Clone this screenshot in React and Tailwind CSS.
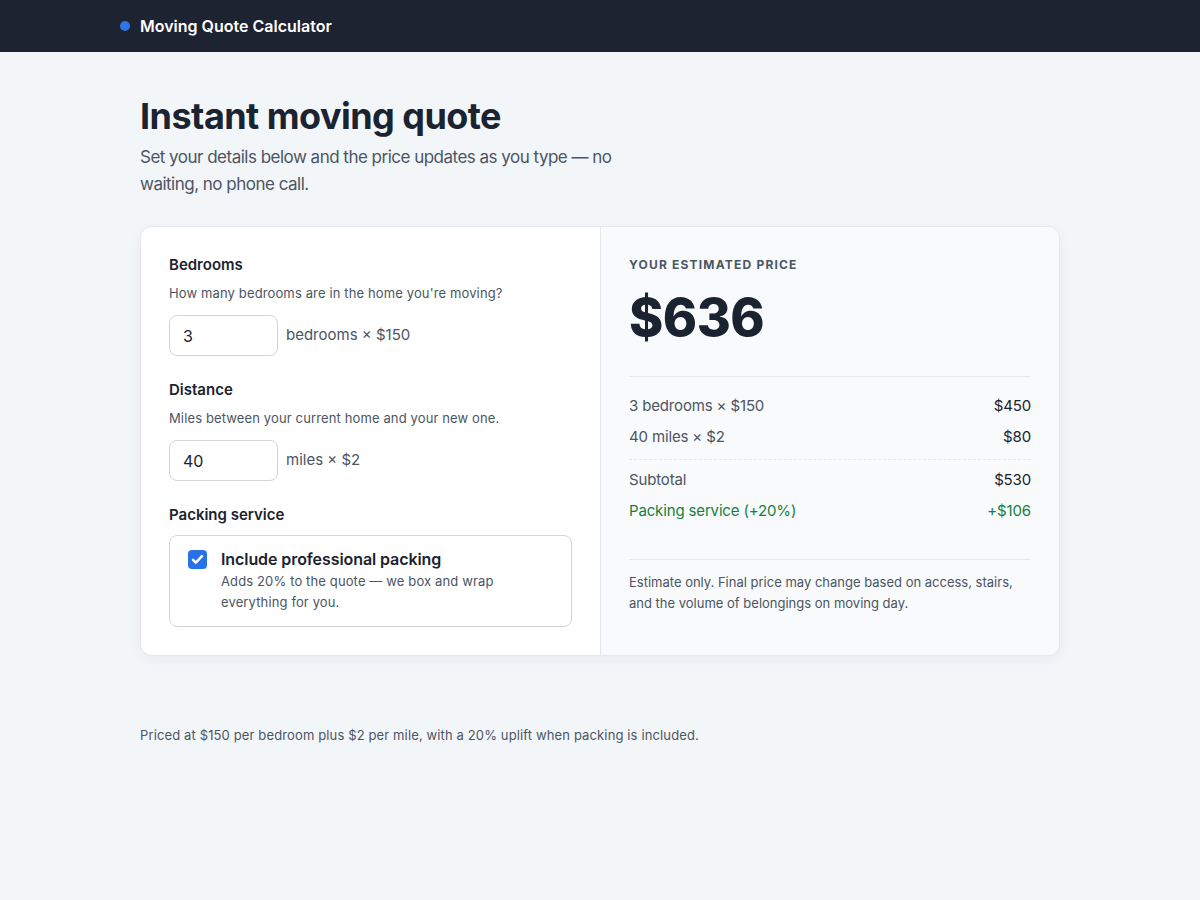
import { useState } from 'react';

const PER_BEDROOM = 150;
const PER_MILE = 2;
const PACKING_RATE = 0.2;

function Field({ label, hint, value, onChange, unit }) {
  return (
    <div>
      <div className="text-[15px] leading-5 font-semibold text-[#1b2230]">{label}</div>
      <p className="mt-2 text-[13px] leading-5 tracking-[0.01em] text-[#4b5563]">{hint}</p>
      <div className="mt-3 flex items-center gap-2">
        <input
          type="text"
          value={value}
          onChange={(e) => onChange(e.target.value.replace(/[^0-9]/g, ''))}
          className="w-[109px] h-[41px] rounded-lg border border-[#d1d5db] bg-white px-[13px] text-[16px] text-[#1b2230] outline-none"
        />
        <span className="text-[15px] text-[#4b5563]">{unit}</span>
      </div>
    </div>
  );
}

function Row({ label, value, green }) {
  return (
    <div className={`flex justify-between text-[15px] leading-[22px] tracking-[-0.01em] ${green ? 'text-[#15803d]' : 'text-[#4b5563]'}`}>
      <span>{label}</span>
      <span className={green ? 'text-[#15803d]' : 'text-[#1b2230]'}>{value}</span>
    </div>
  );
}

export default function App() {
  const [bedrooms, setBedrooms] = useState('3');
  const [miles, setMiles] = useState('40');
  const [packing, setPacking] = useState(true);

  const bedCost = (Number(bedrooms) || 0) * PER_BEDROOM;
  const mileCost = (Number(miles) || 0) * PER_MILE;
  const subtotal = bedCost + mileCost;
  const packingCost = packing ? Math.round(subtotal * PACKING_RATE) : 0;
  const total = subtotal + packingCost;

  return (
    <div className="min-h-screen bg-[#f3f6f9]" style={{ fontFamily: 'Inter, "Noto Sans", sans-serif' }}>
      {/* Top bar */}
      <header className="h-[52px] bg-[#1e2332]">
        <div className="mx-auto max-w-[960px] h-full flex items-center gap-[10px]">
          <span className="w-2.5 h-2.5 rounded-full bg-[#2f74e8]" />
          <span className="text-white text-[16px] font-semibold">Moving Quote Calculator</span>
        </div>
      </header>

      <main className="mx-auto max-w-[920px] pt-[44px] pb-16">
        <h1 className="text-[36px] leading-10 font-bold tracking-[-0.015em] text-[#1b2230]">Instant moving quote</h1>
        <p className="mt-2 max-w-[480px] text-[17px] leading-[27px] tracking-[-0.03em] text-[#4b5563]">
          Set your details below and the price updates as you type — no waiting, no phone call.
        </p>

        {/* Calculator card */}
        <div className="mt-7 grid grid-cols-2 rounded-xl border border-[#e5e7eb] bg-white shadow-[0_4px_14px_rgba(15,23,42,0.05)] overflow-hidden">
          <div className="px-7 pt-7 pb-7 flex flex-col gap-6">
            <Field
              label="Bedrooms"
              hint="How many bedrooms are in the home you're moving?"
              value={bedrooms}
              onChange={setBedrooms}
              unit={`bedrooms × $${PER_BEDROOM}`}
            />
            <Field
              label="Distance"
              hint="Miles between your current home and your new one."
              value={miles}
              onChange={setMiles}
              unit={`miles × $${PER_MILE}`}
            />
            <div>
              <div className="text-[15px] leading-5 font-semibold text-[#1b2230]">Packing service</div>
              <label className="mt-2.5 flex gap-[14px] rounded-lg border border-[#d1d5db] px-[18px] pt-[12px] pb-[13px] cursor-pointer">
                <input
                  type="checkbox"
                  checked={packing}
                  onChange={(e) => setPacking(e.target.checked)}
                  className="sr-only"
                />
                <span
                  className={`mt-[2px] w-[19px] h-[19px] shrink-0 rounded-[4px] flex items-center justify-center ${
                    packing ? 'bg-[#2872e6]' : 'border border-[#9ca3af] bg-white'
                  }`}
                >
                  {packing && (
                    <svg viewBox="0 0 16 16" className="w-[15px] h-[15px]" fill="none">
                      <path d="M3.2 8.4l3 3 6.6-7" stroke="white" strokeWidth="2.6" strokeLinecap="round" strokeLinejoin="round" />
                    </svg>
                  )}
                </span>
                <span>
                  <span className="block text-[16px] leading-[22px] font-semibold tracking-[-0.005em] text-[#1b2230]">Include professional packing</span>
                  <span className="block mt-[1px] text-[13px] leading-[21px] tracking-[0.01em] text-[#4b5563] max-w-[290px]">
                    Adds 20% to the quote — we box and wrap everything for you.
                  </span>
                </span>
              </label>
            </div>
          </div>

          {/* Price summary */}
          <div className="border-l border-[#e5e7eb] bg-[#f8fafc] px-7 pt-7 pb-7">
            <div className="text-[12px] leading-5 font-bold tracking-[0.1em] text-[#4b5563]">YOUR ESTIMATED PRICE</div>
            <div className="mt-[17px] text-[52px] leading-[52px] font-extrabold tracking-[-0.01em] text-[#1b2230]">
              ${total.toLocaleString()}
            </div>
            <div className="mt-8 border-t border-[#e5e7eb] pt-[18px]">
              <div className="flex flex-col gap-[9px]">
                <Row label={`${bedrooms || 0} bedrooms × $${PER_BEDROOM}`} value={`$${bedCost}`} />
                <Row label={`${miles || 0} miles × $${PER_MILE}`} value={`$${mileCost}`} />
              </div>
              <div className="mt-[11px] mb-[9px] border-t border-dashed border-[#e5e7eb]" />
              <div className="flex flex-col gap-[9px]">
                <Row label="Subtotal" value={`$${subtotal}`} />
                {packing && <Row label="Packing service (+20%)" value={`+$${packingCost}`} green />}
              </div>
            </div>
            <div className="mt-[37px] border-t border-[#e5e7eb] pt-3">
              <p className="text-[13px] leading-[21px] text-[#4b5563]">
                Estimate only. Final price may change based on access, stairs, and the volume of belongings on moving day.
              </p>
            </div>
          </div>
        </div>

        <p className="mt-[69px] text-[13px] leading-5 tracking-[0.01em] text-[#4b5563]">
          Priced at ${PER_BEDROOM} per bedroom plus ${PER_MILE} per mile, with a 20% uplift when packing is included.
        </p>
      </main>
    </div>
  );
}
